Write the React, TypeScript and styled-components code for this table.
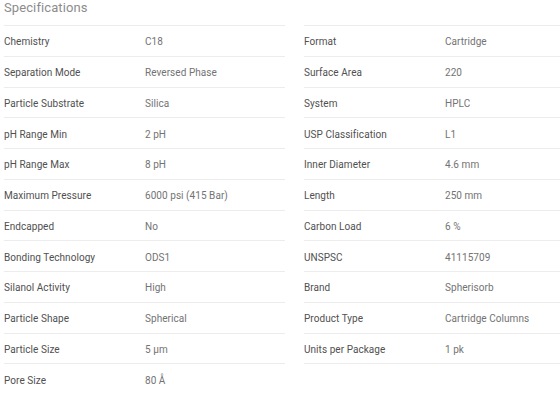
import React from "react";
import styled, { createGlobalStyle } from "styled-components";

const Global = createGlobalStyle`
  html, body { margin: 0; padding: 0; background: #fff; overflow: hidden; }
  body { font-family: Roboto, "Liberation Sans", Arial, sans-serif; }
`;

const Page = styled.div`
  width: 560px;
  padding: 0 0 0 4px;
  box-sizing: border-box;
  overflow: hidden;
`;

const Title = styled.h2`
  margin: 0;
  height: 25px;
  font-size: 13px;
  font-weight: 400;
  color: #8c8c8c;
  line-height: 16px;
  letter-spacing: 0.1px;
`;

const Columns = styled.div`
  display: grid;
  grid-template-columns: 281px 1fr;
  column-gap: 19px;
  align-items: start;
`;

const Column = styled.div`
  display: flex;
  flex-direction: column;
`;

const Row = styled.div`
  display: grid;
  grid-template-columns: 141px 1fr;
  align-items: center;
  height: 30.75px;
  padding-top: 2px;
  box-sizing: border-box;
  border-top: 1px solid #ececec;
  font-size: 10px;
  letter-spacing: 0.05px;
  white-space: nowrap;
`;

const Label = styled.span`
  color: #505050;
`;

const Value = styled.span`
  color: #737373;
`;

const Spacer = styled.div`
  border-top: 1px solid #ececec;
`;

const left: [string, string][] = [
  ["Chemistry", "C18"],
  ["Separation Mode", "Reversed Phase"],
  ["Particle Substrate", "Silica"],
  ["pH Range Min", "2 pH"],
  ["pH Range Max", "8 pH"],
  ["Maximum Pressure", "6000 psi (415 Bar)"],
  ["Endcapped", "No"],
  ["Bonding Technology", "ODS1"],
  ["Silanol Activity", "High"],
  ["Particle Shape", "Spherical"],
  ["Particle Size", "5 µm"],
  ["Pore Size", "80 Å"],
];

const right: [string, string][] = [
  ["Format", "Cartridge"],
  ["Surface Area", "220"],
  ["System", "HPLC"],
  ["USP Classification", "L1"],
  ["Inner Diameter", "4.6 mm"],
  ["Length", "250 mm"],
  ["Carbon Load", "6 %"],
  ["UNSPSC", "41115709"],
  ["Brand", "Spherisorb"],
  ["Product Type", "Cartridge Columns"],
  ["Units per Package", "1 pk"],
];

export default function App() {
  return (
    <>
      <Global />
      <Page>
        <Title>Specifications</Title>
        <Columns>
          <Column>
            {left.map(([k, v]) => (
              <Row key={k}>
                <Label>{k}</Label>
                <Value>{v}</Value>
              </Row>
            ))}
          </Column>
          <Column>
            {right.map(([k, v]) => (
              <Row key={k}>
                <Label>{k}</Label>
                <Value>{v}</Value>
              </Row>
            ))}
            <Spacer />
          </Column>
        </Columns>
      </Page>
    </>
  );
}
